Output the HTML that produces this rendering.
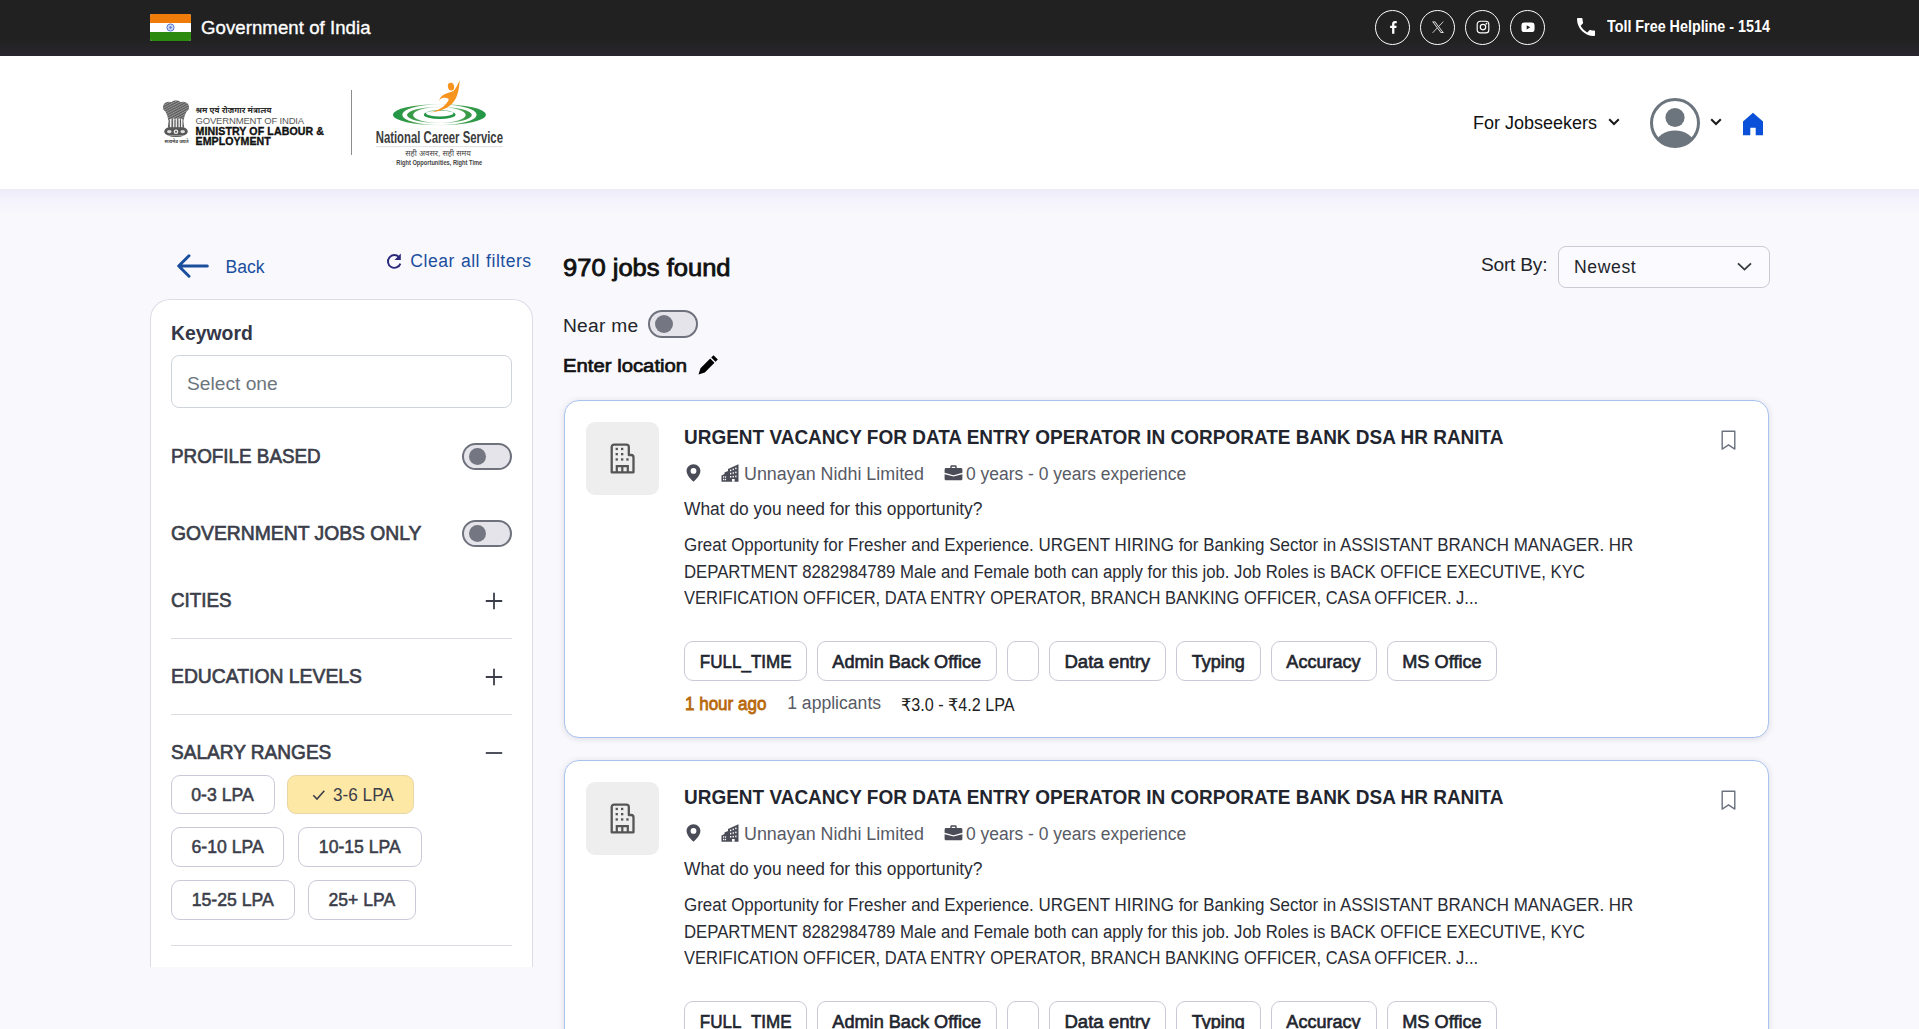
<!DOCTYPE html>
<html lang="en">
<head>
<meta charset="utf-8">
<title>National Career Service - Job Search</title>
<style>
*{box-sizing:border-box;margin:0;padding:0}
html,body{width:1919px;height:1029px;overflow:hidden}
body{position:relative;background:#f9f8fd;font-family:"Liberation Sans","DejaVu Sans",sans-serif;color:#212529;-webkit-font-smoothing:antialiased}
.abs{position:absolute}
.t{position:absolute;white-space:nowrap;line-height:1}
svg{display:block}

/* ---------- top bar ---------- */
#topbar{position:absolute;left:0;top:0;width:1919px;height:56px;background:linear-gradient(#212121 0,#212121 72%,#29262f 100%);color:#fff}
#flag{position:absolute;left:150px;top:14px;width:41px;height:27px;border-radius:2px;overflow:hidden;background:#fff}
#flag i{display:block;height:9px}
#goi{left:201px;top:19.4px;font-size:18.6px;letter-spacing:.06px;color:#fff;-webkit-text-stroke:.35px #fff}
.soc{position:absolute;top:10px;width:35px;height:35px;border:1.5px solid #fff;border-radius:50%}
.soc svg{position:absolute;left:50%;top:50%;transform:translate(-50%,-56%)}
#toll{left:1607.3px;top:18.1px;font-size:16.5px;font-weight:700;color:#fff}

/* ---------- header ---------- */
#header{position:absolute;left:0;top:56px;width:1919px;height:133px;background:#fff}
#hshadow{position:absolute;left:0;top:189px;width:1919px;height:24px;background:linear-gradient(#efecfa,#f4f2fc 45%,#f9f8fd)}

/* ---------- sidebar ---------- */
.blue{color:#1b4f9e}
#back{left:225.500px;top:258.500px;font-size:17.600px}
#clear{left:410.300px;top:252.500px;font-size:17.600px;letter-spacing:.5px;word-spacing:.7px}
#side{position:absolute;left:150px;top:299px;width:383px;height:668px;background:#fff;border:1px solid #dcdde6;border-bottom:0;border-radius:20px 20px 0 0;overflow:hidden}
#side .t{color:#3b3e4a}
.lbl{font-weight:400;font-size:19.5px;left:20px;-webkit-text-stroke:.65px #3b3e4a}
.sw{position:absolute;width:50px;height:27px;border:2px solid #6f717c;border-radius:14px;background:#e4e4ea}
.sw i{position:absolute;left:4.900px;top:2.800px;width:17.500px;height:17.500px;border-radius:50%;background:#747681}
.hr{position:absolute;left:20px;width:341px;height:1px;background:#dddde3}
.chip{position:absolute;height:39.400px;border:1px solid #c9cad7;border-radius:9px;background:#fff;font-size:18.400px;font-weight:400;color:#3b3e4a;-webkit-text-stroke:.55px #3b3e4a;line-height:37.500px;text-align:center;white-space:nowrap}
.chip.on{background:#fee8a6;border-color:#e6d6a8;-webkit-text-stroke:0}

/* ---------- main column ---------- */
.sx{display:inline-block;transform-origin:0 50%;white-space:nowrap}
.cx{display:inline-block;transform-origin:50% 50%;white-space:nowrap}
#found{left:563.3px;top:257.2px;font-size:23px;font-weight:400;color:#111;-webkit-text-stroke:.8px #111}
#near{left:563px;top:315.600px;font-size:19.200px;color:#212529;letter-spacing:.25px}
#eloc{left:563px;top:355.700px;font-size:19.200px;color:#111}
#sortby{left:1481px;top:254.7px;font-size:19.2px;color:#212529;letter-spacing:-.25px}
#sortsel{position:absolute;left:1558px;top:246px;width:212px;height:42px;border:1px solid #c9ccd4;border-radius:8px;background:#fbfafe}
.card{position:absolute;left:564px;width:1205px;height:338px;background:#fff;border:1px solid #a9c3ef;border-radius:15px;box-shadow:0 1px 6px rgba(30,30,50,.13)}
.card .t{color:#2a2c35}
.card>*{margin-left:-1px;margin-top:-1px}
.logo{position:absolute;left:22px;top:22px;width:73px;height:73px;border-radius:9px;background:#eeeeee}
.title{left:120.400px;top:26.900px;font-size:20px;font-weight:700;color:#22252e !important}
.meta{margin-left:-.2px !important;font-size:17.600px;color:#585a65 !important;top:65.800px}
.need{left:120.400px;top:101px;font-size:17.600px}
.para{position:absolute;left:120.400px;top:132.300px;font-size:17.600px;line-height:26.350px;color:#2a2c35;white-space:nowrap}
.tag{position:absolute;top:241.200px;height:40px;border:1px solid #c9cad7;border-radius:9px;background:#fff;font-size:19.200px;font-weight:400;color:#22252e;-webkit-text-stroke:.65px #22252e;line-height:40px;text-align:center;white-space:nowrap}
.ago{left:120.600px;top:293.500px;font-size:19.200px;font-weight:400;color:#b8690b !important;-webkit-text-stroke:.85px #b8690b}
.appl{left:223.200px;top:294.850px;font-size:17.600px;color:#585a65 !important}
.sal{left:337.300px;top:296.600px;font-size:17.600px;color:#222 !important}
</style>
</head>
<body>

<div id="topbar">
  <div id="flag"><i style="background:#ef7c0a"></i><i style="background:#fff"></i><i style="background:#2c8a0f"></i>
    <svg class="abs" style="left:16px;top:9px" width="9" height="9" viewBox="0 0 9 9"><circle cx="4.5" cy="4.5" r="3.6" fill="#c9d6f3" stroke="#5a78d0" stroke-width="1"/><circle cx="4.5" cy="4.5" r="1.2" fill="#5a78d0"/></svg>
  </div>
  <div id="goi" class="t">Government of India</div>

  <a class="soc" style="left:1375px" title="Facebook"><svg width="10.5" height="14" viewBox="0 0 12 16"><path d="M7.6 15.5V9h2.2l.35-2.6H7.6V4.8c0-.75.2-1.25 1.3-1.25h1.35V1.2C10 1.15 9.200 1.100 8.300 1.100c-2 0-3.350 1.200-3.350 3.400V6.400H2.700V9h2.250v6.500z" fill="#fff"/></svg></a>
  <a class="soc" style="left:1420px" title="X"><svg width="13.5" height="12.700" viewBox="0 0 16 15"><path d="M1 .8h3.600l10.400 13.400h-3.600zM2.700 1.600l9.100 11.800h1.500L4.200 1.600z" fill="#fff"/><path d="M14.300 .8L8.700 6.700M7.100 8.300L1.600 14.200" stroke="#fff" stroke-width=".9" fill="none"/></svg></a>
  <a class="soc" style="left:1465px" title="Instagram"><svg width="15" height="15" viewBox="0 0 16 16"><rect x="1.800" y="1.800" width="12.400" height="12.400" rx="3.200" fill="none" stroke="#fff" stroke-width="1.250"/><circle cx="8" cy="8" r="2.900" fill="none" stroke="#fff" stroke-width="1.250"/><circle cx="11.700" cy="4.300" r=".9" fill="#fff"/></svg></a>
  <a class="soc" style="left:1510px" title="YouTube"><svg width="14" height="10.500" viewBox="0 0 16 12"><path d="M2.600 .7C4.500 .4 11.500 .4 13.400 .7c1.100.2 1.700.8 1.900 1.900.3 1.600.3 5.200 0 6.800-.2 1.100-.8 1.700-1.900 1.900-1.900.3-8.900.3-10.800 0C1.500 11.100.9 10.500.7 9.400.4 7.800.4 4.200.7 2.600.9 1.500 1.500.9 2.600.7z" fill="#fff"/><path d="M6.500 3.600v4.800L10.600 6z" fill="#212121"/></svg></a>

  <svg class="abs" style="left:1574.300px;top:14.900px" width="24" height="24" viewBox="0 0 24 24"><path d="M6.620 10.790c1.440 2.830 3.760 5.140 6.590 6.590l2.200-2.200c.270-.270.670-.360 1.020-.240 1.120.370 2.330.570 3.570.570.550 0 1 .450 1 1V20c0 .550-.450 1-1 1C10.610 21 3 13.390 3 4c0-.550.450-1 1-1h3.500c.550 0 1 .450 1 1 0 1.250.200 2.450.570 3.570.110.350.030.740-.250 1.020z" fill="#fff"/></svg>
  <div id="toll" class="t"><span class="sx" style="transform:scaleX(.868)">Toll Free Helpline - 1514</span></div>
</div>

<div id="header">
  <!-- emblem -->
  <svg class="abs" style="left:160px;top:42px" width="32" height="42" viewBox="160 98 32 42">
    <defs><pattern id="hat" width="2.200" height="2.200" patternUnits="userSpaceOnUse" patternTransform="rotate(62)"><rect width="1.050" height="2.200" fill="#fff"/></pattern></defs>
    <g fill="#575757">
      <path d="M171.500 102.200c1.200-2.200 7.800-2.200 9 0 2.600-1.200 6.200-.4 7.800 2.200 1.500 2.500.8 5.400-1.700 7.200-1.400 2.600-2.500 5.300-2.800 8.600h-15.600c-.3-3.300-1.400-6-2.800-8.600-2.500-1.800-3.200-4.700-1.700-7.200 1.600-2.600 5.200-3.400 7.800-2.200z"/>
      <path d="M168.800 119.500h14.400l.9 8h-16.200z"/>
      <ellipse cx="176" cy="131.500" rx="11.700" ry="5.600"/>
    </g>
    <path d="M171.500 102.200c1.200-2.200 7.800-2.200 9 0 2.600-1.200 6.200-.4 7.800 2.200 1.500 2.500.8 5.400-1.700 7.200-1.400 2.600-2.500 5.300-2.800 8.600h-15.600c-.3-3.300-1.400-6-2.800-8.600-2.500-1.800-3.200-4.700-1.700-7.200 1.600-2.600 5.200-3.400 7.800-2.200z" fill="url(#hat)" opacity=".38"/>
    <g fill="#fff">
      <rect x="169.800" y="119" width="1.700" height="8.200" opacity=".9"/><rect x="172.900" y="118.500" width="1.500" height="8.700" opacity=".85"/><rect x="175.600" y="118.500" width="1.500" height="8.700" opacity=".85"/><rect x="178.400" y="118.500" width="1.500" height="8.700" opacity=".85"/><rect x="181" y="119" width="1.500" height="8.200" opacity=".9"/>
      <circle cx="176" cy="131.800" r="2.300" opacity=".9"/><ellipse cx="169.300" cy="131.600" rx="2.300" ry="1.700" opacity=".8"/><ellipse cx="182.700" cy="131.600" rx="2.300" ry="1.700" opacity=".8"/>
      <rect x="165" y="135" width="22" height=".7" opacity=".5"/>
    </g>
    <circle cx="176" cy="131.800" r="1" fill="#575757"/>
  </svg>
  <div class="t" style="left:164.500px;top:84px;font-size:4.600px;font-weight:700;color:#444;font-family:'Liberation Sans','Noto Sans Devanagari','Lohit Devanagari',sans-serif">सत्यमेव जयते</div>
  <div class="t" style="left:195.500px;top:50.800px;font-size:8.200px;font-weight:700;color:#2a2a2a;font-family:'Liberation Sans','Noto Sans Devanagari','Lohit Devanagari',sans-serif">श्रम एवं रोजगार मंत्रालय</div>
  <div class="t" id="lg1" style="left:195.500px;top:60px;font-size:9.500px;color:#5a5a5a;letter-spacing:-.17px">GOVERNMENT OF INDIA</div>
  <div class="t" id="lg2" style="left:195.500px;top:70px;font-size:10.600px;font-weight:700;color:#111;letter-spacing:.1px;-webkit-text-stroke:.35px #111">MINISTRY OF LABOUR &amp;</div>
  <div class="t" id="lg3" style="left:195.500px;top:80.300px;font-size:10.600px;font-weight:700;color:#111;letter-spacing:.06px;-webkit-text-stroke:.35px #111">EMPLOYMENT</div>
  <div class="abs" style="left:351px;top:34px;width:1px;height:65px;background:#8d8d8d"></div>

  <!-- NCS logo -->
  <svg class="abs" style="left:370px;top:20px" width="140" height="96" viewBox="370 76 140 96">
    <defs>
      <linearGradient id="gg" gradientUnits="userSpaceOnUse" x1="392.900" x2="486" y1="0" y2="0"><stop offset="0" stop-color="#1e9647"/><stop offset=".22" stop-color="#3c9b47"/><stop offset=".4" stop-color="#3c9b47" stop-opacity=".55"/><stop offset=".5" stop-color="#3c9b47" stop-opacity=".1"/><stop offset=".6" stop-color="#3c9b47" stop-opacity=".55"/><stop offset=".78" stop-color="#3c9b47"/><stop offset="1" stop-color="#1e9647"/></linearGradient>
    </defs>
    <g fill="url(#gg)" fill-rule="evenodd">
      <path d="M392.900 114.700a46.550 10.600 0 1 0 93.100 0a46.550 10.600 0 1 0 -93.100 0zM402.250 114.700a37.200 10.350 0 1 1 74.400 0a37.200 10.350 0 1 1 -74.400 0z"/>
      <path d="M407 115a32.400 8 0 1 0 64.800 0a32.400 8 0 1 0 -64.800 0zM413.100 115a26.300 7.750 0 1 1 52.600 0a26.300 7.750 0 1 1 -52.600 0z"/>
    </g>
    <path fill="#249647" fill-rule="evenodd" d="M423.800 114.650a15.900 4.250 0 1 0 31.800 0a15.900 4.250 0 1 0 -31.800 0zM426.100 113.300a13.600 3.250 0 1 1 27.200 0a13.600 3.250 0 1 1 -27.200 0z"/>
    <g fill="#f7941e">
      <ellipse cx="451" cy="86.600" rx="3.100" ry="3.900" transform="rotate(-12 451 86.600)"/>
      <path d="M459.500 79.900C459.600 83 459.300 85.500 458.900 87.500C458.300 91.500 457.500 95 456.100 97.800C454.800 100.400 453 102.800 450.900 104.700C448.500 106.900 445.600 108.600 442.300 109.800C438.800 111.100 434.800 112 430.300 112.400C432.600 111.900 434.700 111.200 436.600 110.400C440 108.900 442.900 107 445.200 104.700C446.600 103.300 447.800 101.700 448.600 100.100C448.900 99.400 448.700 98.700 448 98.400C446.300 97.700 444.200 97.600 442.300 98.100C441 98.500 440 99.500 439.200 100.900C439.200 99.900 439.500 99.100 440 98.400C441.100 96.600 442.700 95.200 444.600 94.300C446.500 93.400 448.700 92.600 450.900 92C452.600 91.500 454 90.500 454.900 89.200C456.500 87 457.700 84.500 458.400 82.900C458.900 81.800 459.300 80.800 459.500 79.900Z"/>
    </g>
    <text x="375.700" y="143.200" font-family="'Liberation Sans',sans-serif" font-weight="700" font-size="17" fill="#3d3d3d" textLength="127.300" lengthAdjust="spacingAndGlyphs">National Career Service</text>
    <rect x="376" y="146.300" width="127" height=".8" fill="#d9d9d9"/>
    <text x="405.200" y="156.400" font-family="'Liberation Sans','Noto Sans Devanagari','Lohit Devanagari',sans-serif" font-size="7.500" fill="#444" textLength="65.700" lengthAdjust="spacingAndGlyphs">सही अवसर, सही समय</text>
    <text x="396.300" y="165.100" font-family="'Liberation Sans',sans-serif" font-weight="700" font-size="7.400" fill="#444" textLength="85.900" lengthAdjust="spacingAndGlyphs">Right Opportunities, Right Time</text>
  </svg>

  <!-- right nav -->
  <div class="t" id="fj" style="left:1473px;top:58px;font-size:18px;color:#111">For Jobseekers</div>
  <svg class="abs" style="left:1607px;top:61px" width="14" height="10" viewBox="0 0 14 10"><path d="M2.200 2.200L7 7l4.800-4.800" fill="none" stroke="#1a1a1a" stroke-width="2"/></svg>
  <svg class="abs" style="left:1650px;top:42px" width="50" height="50" viewBox="0 0 50 50"><defs><clipPath id="avc"><circle cx="25" cy="25" r="23.200"/></clipPath></defs><circle cx="25" cy="25" r="23.500" fill="#fff" stroke="#6c757d" stroke-width="3"/><g clip-path="url(#avc)" fill="#6c757d"><circle cx="25" cy="19.500" r="9.600"/><ellipse cx="25" cy="46" rx="19" ry="13.500"/></g></svg>
  <svg class="abs" style="left:1709px;top:61px" width="14" height="10" viewBox="0 0 14 10"><path d="M2.200 2.200L7 7l4.800-4.800" fill="none" stroke="#1a1a1a" stroke-width="2"/></svg>
  <svg class="abs" style="left:1742px;top:56px" width="22" height="24" viewBox="0 0 22 24"><path d="M11 .8L1 9.600V23.200h7.300v-7.500h5.400v7.500H21V9.600z" fill="#0b50d8"/></svg>
</div>
<div id="hshadow"></div>

<!-- ===== sidebar ===== -->
<svg class="abs" style="left:175px;top:253px" width="34" height="26" viewBox="0 0 34 26"><path d="M14 2.800L3.700 13 14 23.200M4 13h28.300" fill="none" stroke="#1b4f9e" stroke-width="3" stroke-linecap="round" stroke-linejoin="round"/></svg>
<div id="back" class="t blue">Back</div>
<svg class="abs" style="left:385px;top:252px" width="18" height="19" viewBox="0 0 18 19"><path d="M14.300 5.400A6.400 6.400 0 1 0 15.400 11.600" fill="none" stroke="#2a2a7c" stroke-width="1.900"/><path d="M15.800 1.600v6.300H9.500z" fill="#2a2a7c"/></svg>
<div id="clear" class="t blue">Clear all filters</div>

<div id="side">
  <div class="t lbl" id="kw" style="top:22.650px;font-size:20.500px;font-weight:700;-webkit-text-stroke:0;color:#343747"><span class="sx" style="transform:scaleX(.945)">Keyword</span></div>
  <div class="abs" style="left:20px;top:55px;width:341px;height:53px;border:1px solid #ced4da;border-radius:8px;background:#fff"></div>
  <div class="t" id="sel1" style="left:36px;top:73.500px;font-size:19.200px;color:#6c757d">Select one</div>

  <div class="t lbl" id="pb" style="top:146.900px"><span class="sx" style="transform:scaleX(0.9662)">PROFILE BASED</span></div>
  <div class="sw" style="left:311px;top:143px"><i></i></div>
  <div class="t lbl" id="gj" style="top:223.500px"><span class="sx" style="transform:scaleX(0.9908)">GOVERNMENT JOBS ONLY</span></div>
  <div class="sw" style="left:311px;top:220.200px"><i></i></div>

  <div class="t lbl" id="ci" style="top:290.900px"><span class="sx" style="transform:scaleX(0.9641)">CITIES</span></div>
  <svg class="abs" style="left:334px;top:292px" width="18" height="18" viewBox="0 0 18 18"><path d="M9 .8v16.400M.8 9h16.400" stroke="#3b3e4a" stroke-width="1.800"/></svg>
  <div class="hr" style="top:338px"></div>
  <div class="t lbl" id="ed" style="top:367.100px"><span class="sx" style="transform:scaleX(0.9918)">EDUCATION LEVELS</span></div>
  <svg class="abs" style="left:334px;top:368px" width="18" height="18" viewBox="0 0 18 18"><path d="M9 .8v16.400M.8 9h16.400" stroke="#3b3e4a" stroke-width="1.800"/></svg>
  <div class="hr" style="top:414px"></div>
  <div class="t lbl" id="sr" style="top:442.900px"><span class="sx" style="transform:scaleX(0.9774)">SALARY RANGES</span></div>
  <svg class="abs" style="left:334px;top:444px" width="18" height="18" viewBox="0 0 18 18"><path d="M.8 9h16.400" stroke="#3b3e4a" stroke-width="1.800"/></svg>

  <div class="chip" style="left:20.200px;top:475px;width:103.500px"><span class="cx" style="transform:scaleX(.963)">0-3 LPA</span></div>
  <div class="chip on" style="left:136.300px;top:475px;width:126.400px;text-align:left"><svg class="abs" style="left:24px;top:13px" width="14" height="12" viewBox="0 0 14 12"><path d="M1.300 6.300l3.700 3.700L12.300 1.800" fill="none" stroke="#3b3e4a" stroke-width="1.600"/></svg><span class="sx" style="transform:scaleX(.934);margin-left:44.500px">3-6 LPA</span></div>
  <div class="chip" style="left:20.200px;top:527.300px;width:113.300px"><span class="cx" style="transform:scaleX(.959)">6-10 LPA</span></div>
  <div class="chip" style="left:147.200px;top:527.300px;width:123.400px"><span class="cx" style="transform:scaleX(.957)">10-15 LPA</span></div>
  <div class="chip" style="left:20.200px;top:580.300px;width:123.500px"><span class="cx" style="transform:scaleX(.961)">15-25 LPA</span></div>
  <div class="chip" style="left:157.400px;top:580.300px;width:107.300px"><span class="cx" style="transform:scaleX(.954)">25+ LPA</span></div>
  <div class="hr" style="top:645.400px"></div>
</div>



<!-- ===== main column ===== -->
<div id="found" class="t"><span class="sx" style="transform:scaleX(1.1105)">970 jobs found</span></div>
<div id="sortby" class="t">Sort By:</div>
<div id="sortsel"><div class="t" id="newest" style="left:15px;top:11.5px;font-size:17.6px;color:#212529;letter-spacing:.6px">Newest</div><svg class="abs" style="left:177px;top:14px" width="17" height="11" viewBox="0 0 17 11"><path d="M2 2.300l6.500 6.300L15 2.300" fill="none" stroke="#343a40" stroke-width="1.800"/></svg></div>
<div id="near" class="t">Near me</div>
<div class="sw" style="left:648px;top:310px;height:28px"><i style="left:4.700px;top:3px;width:18px;height:18px"></i></div>
<div id="eloc" class="t" style="-webkit-text-stroke:.7px #111"><span class="sx" style="transform:scaleX(1.058)">Enter location</span></div>
<svg class="abs" style="left:697px;top:354px" width="23" height="22" viewBox="0 0 23 22"><path d="M16.500 1.200l4.300 4.300-2.300 2.300-4.300-4.300zM13.200 4.500l4.300 4.300-9.700 9.700-6.300 2 2-6.300z" fill="#000"/></svg>

<div class="card" style="top:400px">
  <div class="logo"><svg class="abs" style="left:23px;top:17.600px" width="28" height="34" viewBox="609 441 28 34"><path d="M611.700 473.300V448a2.400 2.400 0 0 1 2.400-2.400h12.300a2.400 2.400 0 0 1 2.400 2.400v8h2.300a2.400 2.400 0 0 1 2.400 2.400v14.900z" fill="none" stroke="#555" stroke-width="2.300" stroke-linejoin="round"/><path d="M616.800 473.300v-6.200h11v6.200M622.300 467.500v5.800" fill="none" stroke="#555" stroke-width="2.200"/><g fill="#555"><rect x="615.600" y="448.800" width="2.300" height="2.300"/><rect x="621" y="448.800" width="2.300" height="2.300"/><rect x="615.600" y="454" width="2.300" height="2.300"/><rect x="621" y="454" width="2.300" height="2.300"/><rect x="615.600" y="459.300" width="2.300" height="2.300"/><rect x="621" y="459.300" width="2.300" height="2.300"/><rect x="626.300" y="459.300" width="2.300" height="2.300"/></g></svg></div>
  <div class="t title"><span class="sx" style="transform:scaleX(.9492)">URGENT VACANCY FOR DATA ENTRY OPERATOR IN CORPORATE BANK DSA HR RANITA</span></div>
  <svg class="abs" style="left:121.500px;top:64px" width="15" height="18" viewBox="0 0 15 18"><path d="M7.500 .3C3.600 .3 .6 3.300 .6 7c0 4.600 5.100 9 6.900 10.700C9.300 16 14.400 11.600 14.400 7c0-3.700-3-6.700-6.900-6.700zm0 9.500a2.900 2.900 0 1 1 0-5.800 2.900 2.900 0 0 1 0 5.800z" fill="#4a4c57"/></svg>
  <svg class="abs" style="left:157px;top:63.500px" width="18" height="18" viewBox="0 0 18 18"><path d="M.5 17.800V11.500l3-1.400V8.600l3.500-1.700V5L17.500 .2v17.600z" fill="#4a4c57"/><g fill="#fff"><rect x="9" y="5.600" width="1.300" height="1.600"/><rect x="11.600" y="4.600" width="1.300" height="1.600"/><rect x="14.200" y="3.600" width="1.300" height="1.600"/><rect x="9" y="8.800" width="1.300" height="1.600"/><rect x="11.600" y="8.200" width="1.300" height="1.600"/><rect x="14.200" y="7.600" width="1.300" height="1.600"/><rect x="9" y="12" width="1.300" height="1.600"/><rect x="11.600" y="11.800" width="1.300" height="1.600"/><rect x="14.200" y="11.600" width="1.300" height="1.600"/><rect x="2" y="12.300" width="1.200" height="1.400"/><rect x="3.900" y="12.300" width="1.200" height="1.400"/><rect x="2" y="14.800" width="1.200" height="1.400"/><rect x="3.900" y="14.800" width="1.200" height="1.400"/><rect x="11" y="15" width="2.600" height="2.800"/></g></svg>
  <div class="t meta" style="left:179.300px"><span class="sx" style="transform:scaleX(1.017)">Unnayan Nidhi Limited</span></div>
  <svg class="abs" style="left:380px;top:65px" width="19" height="16" viewBox="0 0 19 16"><path d="M6.300 3V1.600C6.300 .9 6.900 .3 7.600 .3h3.800c.7 0 1.300.6 1.300 1.300V3h4.100c.9 0 1.600.7 1.600 1.600v3.200L9.500 10.200.6 7.800V4.600C.6 3.700 1.300 3 2.200 3zm1.400 0h3.600V1.700H7.700zM.6 9.200l8.900 2.400 8.900-2.400v4.500c0 .9-.7 1.600-1.600 1.600H2.200c-.9 0-1.600-.7-1.600-1.600z" fill="#4a4c57"/></svg>
  <div class="t meta" style="left:401.500px"><span class="sx" style="transform:scaleX(.992)">0 years - 0 years experience</span></div>
  <div class="t need"><span class="sx" style="transform:scaleX(.9875)">What do you need for this opportunity?</span></div>
  <p class="para"><span class="sx" style="transform:scaleX(.9642)">Great Opportunity for Fresher and Experience. URGENT HIRING for Banking Sector in ASSISTANT BRANCH MANAGER. HR</span><br><span class="sx" style="transform:scaleX(.9518)">DEPARTMENT 8282984789 Male and Female both can apply for this job. Job Roles is BACK OFFICE EXECUTIVE, KYC</span><br><span class="sx" style="transform:scaleX(.9395)">VERIFICATION OFFICER, DATA ENTRY OPERATOR, BRANCH BANKING OFFICER, CASA OFFICER. J...</span></p>
  <div class="tag" style="left:120.4px;width:122.4px"><span class="cx" style="transform:scaleX(0.887)">FULL_TIME</span></div>
  <div class="tag" style="left:253px;width:179.8px"><span class="cx" style="transform:scaleX(0.945)">Admin Back Office</span></div>
  <div class="tag" style="left:442.800px;width:32px"></div>
  <div class="tag" style="left:485.25px;width:116.5px"><span class="cx" style="transform:scaleX(0.968)">Data entry</span></div>
  <div class="tag" style="left:612.25px;width:84.4px"><span class="cx" style="transform:scaleX(0.941)">Typing</span></div>
  <div class="tag" style="left:707px;width:105.5px"><span class="cx" style="transform:scaleX(0.94)">Accuracy</span></div>
  <div class="tag" style="left:823px;width:109.5px"><span class="cx" style="transform:scaleX(0.947)">MS Office</span></div>
  <div class="t ago"><span class="sx" style="transform:scaleX(.887)">1 hour ago</span></div>
  <div class="t appl"><span class="sx" style="transform:scaleX(1.0)">1 applicants</span></div>
  <div class="t sal"><span class="sx" style="transform:scaleX(.918)">₹3.0 - ₹4.2 LPA</span></div>
  <svg class="abs" style="left:1156px;top:29.500px" width="17" height="21" viewBox="0 0 17 21"><path d="M2.200 1.300h12.600v17.800L8.500 14.800 2.200 19.100z" fill="none" stroke="#6b7280" stroke-width="1.4" stroke-linejoin="round"/></svg>
</div>
<div class="card" style="top:760px">
  <div class="logo"><svg class="abs" style="left:23px;top:17.600px" width="28" height="34" viewBox="609 441 28 34"><path d="M611.700 473.300V448a2.400 2.400 0 0 1 2.400-2.400h12.300a2.400 2.400 0 0 1 2.400 2.400v8h2.300a2.400 2.400 0 0 1 2.400 2.400v14.900z" fill="none" stroke="#555" stroke-width="2.300" stroke-linejoin="round"/><path d="M616.800 473.300v-6.200h11v6.200M622.300 467.500v5.800" fill="none" stroke="#555" stroke-width="2.200"/><g fill="#555"><rect x="615.600" y="448.800" width="2.300" height="2.300"/><rect x="621" y="448.800" width="2.300" height="2.300"/><rect x="615.600" y="454" width="2.300" height="2.300"/><rect x="621" y="454" width="2.300" height="2.300"/><rect x="615.600" y="459.300" width="2.300" height="2.300"/><rect x="621" y="459.300" width="2.300" height="2.300"/><rect x="626.300" y="459.300" width="2.300" height="2.300"/></g></svg></div>
  <div class="t title"><span class="sx" style="transform:scaleX(.9492)">URGENT VACANCY FOR DATA ENTRY OPERATOR IN CORPORATE BANK DSA HR RANITA</span></div>
  <svg class="abs" style="left:121.500px;top:64px" width="15" height="18" viewBox="0 0 15 18"><path d="M7.500 .3C3.600 .3 .6 3.300 .6 7c0 4.600 5.100 9 6.900 10.700C9.300 16 14.400 11.600 14.400 7c0-3.700-3-6.700-6.900-6.700zm0 9.500a2.900 2.900 0 1 1 0-5.800 2.900 2.900 0 0 1 0 5.800z" fill="#4a4c57"/></svg>
  <svg class="abs" style="left:157px;top:63.500px" width="18" height="18" viewBox="0 0 18 18"><path d="M.5 17.800V11.500l3-1.400V8.600l3.500-1.700V5L17.500 .2v17.600z" fill="#4a4c57"/><g fill="#fff"><rect x="9" y="5.600" width="1.300" height="1.600"/><rect x="11.600" y="4.600" width="1.300" height="1.600"/><rect x="14.200" y="3.600" width="1.300" height="1.600"/><rect x="9" y="8.800" width="1.300" height="1.600"/><rect x="11.600" y="8.200" width="1.300" height="1.600"/><rect x="14.200" y="7.600" width="1.300" height="1.600"/><rect x="9" y="12" width="1.300" height="1.600"/><rect x="11.600" y="11.800" width="1.300" height="1.600"/><rect x="14.200" y="11.600" width="1.300" height="1.600"/><rect x="2" y="12.300" width="1.200" height="1.400"/><rect x="3.900" y="12.300" width="1.200" height="1.400"/><rect x="2" y="14.800" width="1.200" height="1.400"/><rect x="3.900" y="14.800" width="1.200" height="1.400"/><rect x="11" y="15" width="2.600" height="2.800"/></g></svg>
  <div class="t meta" style="left:179.300px"><span class="sx" style="transform:scaleX(1.017)">Unnayan Nidhi Limited</span></div>
  <svg class="abs" style="left:380px;top:65px" width="19" height="16" viewBox="0 0 19 16"><path d="M6.300 3V1.600C6.300 .9 6.900 .3 7.600 .3h3.800c.7 0 1.300.6 1.300 1.300V3h4.100c.9 0 1.600.7 1.600 1.600v3.200L9.500 10.200.6 7.800V4.600C.6 3.700 1.300 3 2.200 3zm1.400 0h3.600V1.700H7.700zM.6 9.200l8.900 2.400 8.900-2.400v4.500c0 .9-.7 1.600-1.600 1.600H2.200c-.9 0-1.600-.7-1.600-1.600z" fill="#4a4c57"/></svg>
  <div class="t meta" style="left:401.500px"><span class="sx" style="transform:scaleX(.992)">0 years - 0 years experience</span></div>
  <div class="t need"><span class="sx" style="transform:scaleX(.9875)">What do you need for this opportunity?</span></div>
  <p class="para"><span class="sx" style="transform:scaleX(.9642)">Great Opportunity for Fresher and Experience. URGENT HIRING for Banking Sector in ASSISTANT BRANCH MANAGER. HR</span><br><span class="sx" style="transform:scaleX(.9518)">DEPARTMENT 8282984789 Male and Female both can apply for this job. Job Roles is BACK OFFICE EXECUTIVE, KYC</span><br><span class="sx" style="transform:scaleX(.9395)">VERIFICATION OFFICER, DATA ENTRY OPERATOR, BRANCH BANKING OFFICER, CASA OFFICER. J...</span></p>
  <div class="tag" style="left:120.4px;width:122.4px"><span class="cx" style="transform:scaleX(0.887)">FULL_TIME</span></div>
  <div class="tag" style="left:253px;width:179.8px"><span class="cx" style="transform:scaleX(0.945)">Admin Back Office</span></div>
  <div class="tag" style="left:442.800px;width:32px"></div>
  <div class="tag" style="left:485.25px;width:116.5px"><span class="cx" style="transform:scaleX(0.968)">Data entry</span></div>
  <div class="tag" style="left:612.25px;width:84.4px"><span class="cx" style="transform:scaleX(0.941)">Typing</span></div>
  <div class="tag" style="left:707px;width:105.5px"><span class="cx" style="transform:scaleX(0.94)">Accuracy</span></div>
  <div class="tag" style="left:823px;width:109.5px"><span class="cx" style="transform:scaleX(0.947)">MS Office</span></div>
  <div class="t ago"><span class="sx" style="transform:scaleX(.887)">1 hour ago</span></div>
  <div class="t appl"><span class="sx" style="transform:scaleX(1.0)">1 applicants</span></div>
  <div class="t sal"><span class="sx" style="transform:scaleX(.918)">₹3.0 - ₹4.2 LPA</span></div>
  <svg class="abs" style="left:1156px;top:29.500px" width="17" height="21" viewBox="0 0 17 21"><path d="M2.200 1.300h12.600v17.800L8.500 14.800 2.200 19.100z" fill="none" stroke="#6b7280" stroke-width="1.4" stroke-linejoin="round"/></svg>
</div>
</body>
</html>
